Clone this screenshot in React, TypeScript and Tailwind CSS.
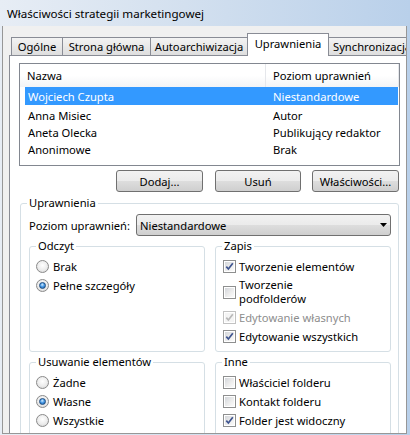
import React from "react";

const btnBg =
  "bg-[linear-gradient(to_bottom,#f2f2f2_0%,#ebebeb_50%,#dddddd_51%,#cfcfcf_100%)]";
const tabBg = "bg-[linear-gradient(to_bottom,#f3f3f3,#dedede)]";

function Radio({ checked }: { checked?: boolean }) {
  return (
    <span className="w-[13px] h-[13px] rounded-full border border-[#8a8a8a] bg-[radial-gradient(circle_at_50%_40%,#ffffff_0%,#ececec_55%,#cdcdcd_100%)] flex items-center justify-center shrink-0">
      {checked && (
        <span className="w-[7px] h-[7px] rounded-full border border-[#1d4c80] bg-[radial-gradient(circle_at_45%_35%,#d4ecff_0%,#4a9be6_45%,#1a5aa3_100%)]" />
      )}
    </span>
  );
}

function Check({ checked, disabled }: { checked?: boolean; disabled?: boolean }) {
  return (
    <span
      className={
        disabled
          ? "w-[13px] h-[13px] border border-[#c2c2c2] bg-white p-[1px] flex shrink-0"
          : "w-[13px] h-[13px] border border-[#8e8f8f] bg-white p-[1px] flex shrink-0"
      }
    >
      <span
        className={
          disabled
            ? "flex-1 bg-[#f4f4f4] flex items-center justify-center"
            : "flex-1 bg-[linear-gradient(135deg,#d3d6da_0%,#eeeeee_60%,#fbfbfb_100%)] flex items-center justify-center"
        }
      >
        {checked && (
          <svg width="9" height="9" viewBox="0 0 9 9">
            <path
              d="M1.3 4.6 L3.4 7 L7.8 1.3"
              fill="none"
              stroke={disabled ? "#b8b8b8" : "#3e548f"}
              strokeWidth="1.7"
            />
          </svg>
        )}
      </span>
    </span>
  );
}

function Group({
  label,
  className,
  children,
}: {
  label: string;
  className: string;
  children?: React.ReactNode;
}) {
  return (
    <div className={"relative border border-[#d5dfe5] rounded-[3px] " + className}>
      <span className="absolute left-[6px] top-[-9px] bg-white px-[2px] leading-[16px] whitespace-nowrap">
        {label}
      </span>
      {children}
    </div>
  );
}

function RadioRow({ label, checked }: { label: string; checked?: boolean }) {
  return (
    <div className="h-[19px] flex items-center gap-[4px] whitespace-nowrap">
      <Radio checked={checked} />
      <span>{label}</span>
    </div>
  );
}

function CheckRow({
  label,
  checked,
  disabled,
  className,
}: {
  label: React.ReactNode;
  checked?: boolean;
  disabled?: boolean;
  className?: string;
}) {
  return (
    <div className={"flex items-center gap-[3px] whitespace-nowrap " + (className ?? "h-[19px]")}>
      <Check checked={checked} disabled={disabled} />
      <span className={disabled ? "text-[#8d8d8d]" : ""}>{label}</span>
    </div>
  );
}

export default function App() {
  const rows = [
    ["Anna Misiec", "Autor"],
    ["Aneta Olecka", "Publikujący redaktor"],
    ["Anonimowe", "Brak"],
  ];
  return (
    <div className="w-[410px] h-[435px] overflow-hidden flex flex-col bg-[linear-gradient(to_right,#e7edf5_0%,#d3e0ef_45%,#b9d0ea_100%)] text-[11.2px] leading-[15px] text-black font-['Noto_Sans','DejaVu_Sans',sans-serif]">
      <div className="h-[26px] shrink-0 pl-[7px] flex items-center text-[11.6px]">
        Właściwości strategii marketingowej
      </div>
      <div className="flex-1 ml-[2px] mr-[3px] mb-[1px] border-l border-r border-b border-[#979797] bg-[#f0f0f0] flex flex-col min-h-0 overflow-hidden">
        {/* tabs */}
        <div className="h-[29px] shrink-0 pt-[7px] pl-[8px] flex items-end whitespace-nowrap">
          <div className={"shrink-0 w-[51px] h-[18px] border-l border-t border-[#898c95] flex items-center justify-center " + tabBg}>
            Ogólne
          </div>
          <div className={"shrink-0 w-[88px] h-[18px] border-l border-t border-[#898c95] flex items-center justify-center " + tabBg}>
            Strona główna
          </div>
          <div className={"shrink-0 w-[97px] h-[18px] border-l border-t border-[#898c95] flex items-center justify-center " + tabBg}>
            Autoarchiwizacja
          </div>
          <div className="shrink-0 relative z-10 w-[82px] h-[23px] -mb-[1px] border-l border-t border-r border-[#898c95] bg-white flex items-start pt-[2px] justify-center">
            Uprawnienia
          </div>
          <div className={"shrink-0 w-[92px] h-[18px] border-t border-r border-[#898c95] flex items-center pl-[4px] overflow-hidden " + tabBg}>
            Synchronizacja
          </div>
        </div>
        {/* panel */}
        <div className="flex-1 ml-[6px] border-l border-t border-[#898c95] bg-white flex flex-col min-h-0">
          {/* list */}
          <div className="ml-[9px] mt-[7px] w-[381px] h-[103px] shrink-0 border border-[#828790] bg-white flex flex-col whitespace-nowrap">
            <div className="h-[23px] flex bg-[linear-gradient(to_bottom,#ffffff_0%,#ffffff_50%,#f3f4f6_100%)]">
              <div className="w-[246px] pl-[7px] flex items-center border-r border-[#e5e7eb]">
                Nazwa
              </div>
              <div className="flex-1 pl-[7px] flex items-center border-r border-[#e5e7eb]">
                Poziom uprawnień
              </div>
            </div>
            <div className="ml-[5px] mr-[1px] h-[18px] flex items-center bg-[#3399ff] text-white">
              <div className="w-[245px] pl-[3px]">Wojciech Czupta</div>
              <div className="pl-[3px]">Niestandardowe</div>
            </div>
            <div className="mt-[2px]">
              {rows.map(([a, b]) => (
                <div key={a} className="ml-[5px] h-[17px] flex items-center">
                  <div className="w-[245px] pl-[3px]">{a}</div>
                  <div className="pl-[3px]">{b}</div>
                </div>
              ))}
            </div>
          </div>
          {/* buttons */}
          <div className="mt-[4px] ml-[106px] flex shrink-0 whitespace-nowrap">
            <div className={"w-[87px] h-[22px] rounded-[3px] border border-[#707070] flex items-center justify-center " + btnBg}>
              Dodaj...
            </div>
            <div className={"ml-[12px] w-[86px] h-[22px] rounded-[3px] border border-[#707070] flex items-center justify-center " + btnBg}>
              Usuń
            </div>
            <div className={"ml-[11px] w-[87px] h-[22px] rounded-[3px] border border-[#707070] flex items-center justify-center " + btnBg}>
              Właściwości...
            </div>
          </div>
          {/* Uprawnienia group */}
          <Group
            label="Uprawnienia"
            className="mt-[11px] ml-[10px] w-[379px] h-[300px] shrink-0 flex flex-col"
          >
            <div className="mt-[10px] pl-[8px] flex items-center whitespace-nowrap">
              <span className="w-[107px]">Poziom uprawnień:</span>
              <div className={"w-[255px] h-[22px] rounded-[3px] border border-[#707070] flex items-center justify-between pl-[3px] pr-[3px] " + btnBg}>
                <span>Niestandardowe</span>
                <svg width="7" height="4" viewBox="0 0 7 4">
                  <path d="M0 0 H7 L3.5 4 Z" fill="#000" />
                </svg>
              </div>
            </div>
            <div className="mt-[10px] ml-[8px] grid grid-cols-[176px_176px] gap-x-[10px] gap-y-[10px]">
              <Group label="Odczyt" className="h-[106px] pt-[10px] pl-[6px]">
                <RadioRow label="Brak" />
                <RadioRow label="Pełne szczegóły" checked />
              </Group>
              <Group label="Zapis" className="h-[106px] pt-[10px] pl-[7px]">
                <CheckRow label="Tworzenie elementów" checked />
                <CheckRow
                  className="mt-[2px] h-[28px]"
                  label={
                    <span className="block leading-[14px]">
                      Tworzenie
                      <br />
                      podfolderów
                    </span>
                  }
                />
                <CheckRow className="mt-[2px] h-[19px]" label="Edytowanie własnych" checked disabled />
                <CheckRow label="Edytowanie wszystkich" checked />
              </Group>
              <Group label="Usuwanie elementów" className="h-[106px] pt-[10px] pl-[6px]">
                <RadioRow label="Żadne" />
                <RadioRow label="Własne" checked />
                <RadioRow label="Wszystkie" />
              </Group>
              <Group label="Inne" className="h-[106px] pt-[10px] pl-[7px]">
                <CheckRow label="Właściciel folderu" />
                <CheckRow label="Kontakt folderu" />
                <CheckRow label="Folder jest widoczny" checked />
              </Group>
            </div>
          </Group>
        </div>
      </div>
    </div>
  );
}
